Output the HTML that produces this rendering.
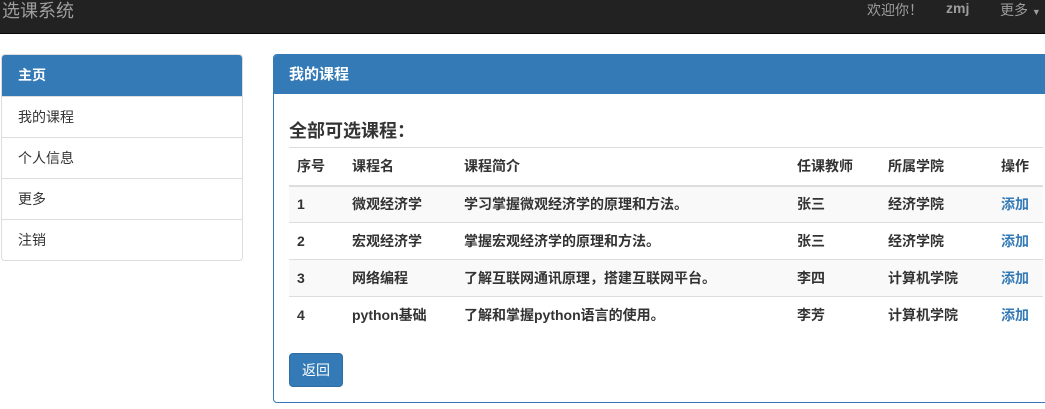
<!DOCTYPE html>
<html><head><meta charset="utf-8"><style>
*{box-sizing:border-box;margin:0;padding:0}
body{width:1045px;height:409px;overflow:hidden;background:#fff;font-family:"Liberation Sans","Noto Sans CJK SC",sans-serif;font-size:14px;color:#333;position:relative}
.nav{position:absolute;left:0;top:0;width:1045px;height:34px;background:#222;border-bottom:1px solid #080808}
.brand{position:absolute;left:2px;top:-3px;font-size:18px;color:#9d9d9d}
.nr{position:absolute;top:-1px;font-size:14px;color:#9d9d9d}
.side{position:absolute;left:1px;top:54px;width:242px;border:1px solid #ddd;border-radius:4px;overflow:hidden}
.side div{height:41px;line-height:40px;padding-left:16px;border-top:1px solid #ddd;font-size:14px}
.side div.a{background:#337ab7;color:#fff;font-weight:bold;border-top:none;height:41px;line-height:41px}
.main{position:absolute;left:273px;top:54px;width:786px;height:349px;border:1px solid #337ab7;border-radius:4px;overflow:hidden}
.ph{height:39px;background:#337ab7;color:#fff;font-weight:bold;font-size:15px;line-height:39px;padding-left:15px}
h3{position:absolute;left:15px;top:62px;font-size:18px;font-weight:bold;color:#333}
table{position:absolute;left:15px;top:92px;width:754px;border-collapse:collapse}
td,th{padding:0 8px;text-align:left;border-top:1px solid #ddd;height:37px;font-weight:bold;font-size:14px;white-space:nowrap}
th{height:38px;border-bottom:2px solid #ddd}
tbody tr:nth-child(odd){background:#f9f9f9}
a{color:#337ab7;text-decoration:none}
.btn{position:absolute;left:15px;top:298px;width:54px;height:34px;background:#337ab7;border:1px solid #2e6da4;border-radius:4px;color:#fff;line-height:32px;text-align:center;font-size:14px}
</style></head><body>
<div class="nav"><span class="brand">选课系统</span>
<span class="nr" style="left:867px;top:0">欢迎你！</span>
<span class="nr" style="left:946px;top:0;font-weight:bold">zmj</span>
<span class="nr" style="left:1000px;top:0">更多 <span style="font-size:9px">▼</span></span></div>
<div class="side"><div class="a">主页</div><div>我的课程</div><div>个人信息</div><div>更多</div><div>注销</div></div>
<div class="main"><div class="ph">我的课程</div>
<h3>全部可选课程：</h3>
<table><colgroup><col style="width:55px"><col style="width:112px"><col style="width:333px"><col style="width:91px"><col style="width:113px"><col></colgroup>
<thead><tr><th>序号</th><th>课程名</th><th>课程简介</th><th>任课教师</th><th>所属学院</th><th>操作</th></tr></thead>
<tbody>
<tr><td>1</td><td>微观经济学</td><td>学习掌握微观经济学的原理和方法。</td><td>张三</td><td>经济学院</td><td><a>添加</a></td></tr>
<tr><td>2</td><td>宏观经济学</td><td>掌握宏观经济学的原理和方法。</td><td>张三</td><td>经济学院</td><td><a>添加</a></td></tr>
<tr><td>3</td><td>网络编程</td><td>了解互联网通讯原理，搭建互联网平台。</td><td>李四</td><td>计算机学院</td><td><a>添加</a></td></tr>
<tr><td>4</td><td>python基础</td><td>了解和掌握python语言的使用。</td><td>李芳</td><td>计算机学院</td><td><a>添加</a></td></tr>
</tbody></table>
<div class="btn">返回</div></div>
</body></html>
